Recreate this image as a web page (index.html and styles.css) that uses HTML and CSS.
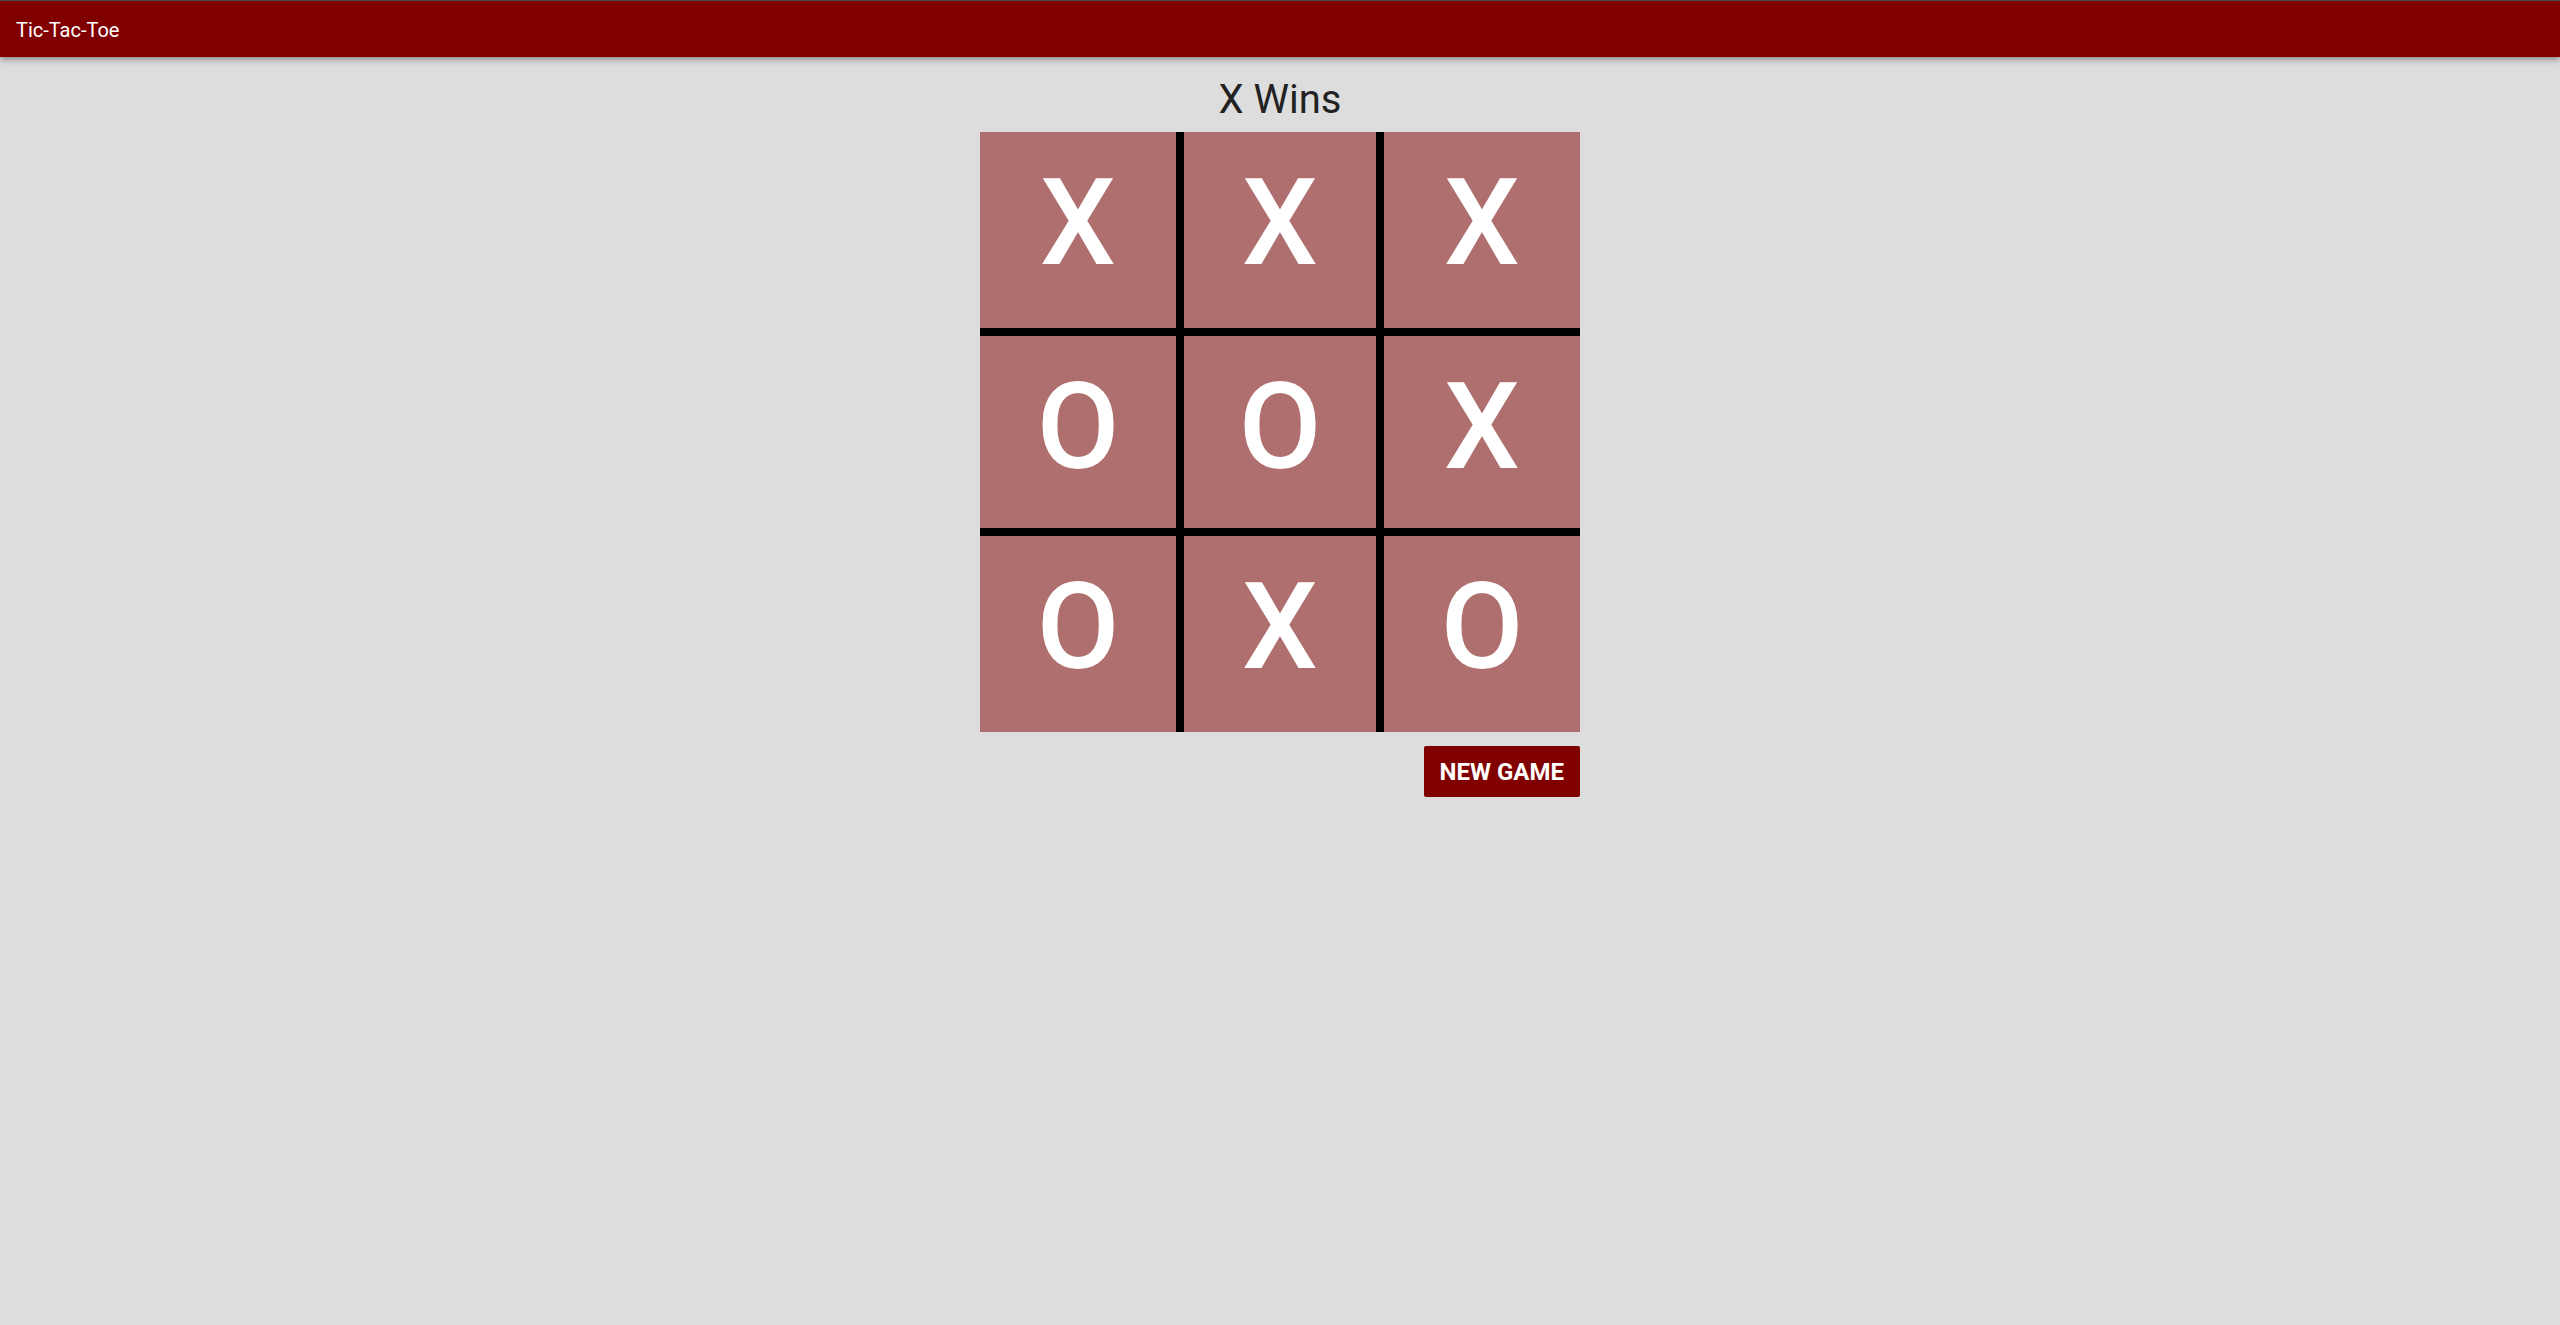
FILE: index.html
```html
<!DOCTYPE html>
<html>
<head>
<meta charset="utf-8">
<title>Tic-Tac-Toe</title>
<link rel="stylesheet" href="styles.css">
</head>
<body>
<header class="appbar"><span class="appbar-title">Tic-Tac-Toe</span></header>
<main class="game">
  <h1 class="status">X Wins</h1>
  <div class="board">
    <div class="cell c-tl">X</div>
    <div class="cell c-tm">X</div>
    <div class="cell c-tr">X</div>
    <div class="cell c-ml">O</div>
    <div class="cell c-mm">O</div>
    <div class="cell c-mr">X</div>
    <div class="cell c-bl">O</div>
    <div class="cell c-bm">X</div>
    <div class="cell c-br">O</div>
  </div>
  <div class="actions"><button class="new-game">NEW GAME</button></div>
</main>
</body>
</html>
```
FILE: styles.css
```css
html, body {
  margin: 0;
  padding: 0;
  background: #dddddd;
  font-family: Roboto, "Liberation Sans", sans-serif;
}
.appbar {
  box-sizing: border-box;
  height: 57px;
  border-top: 1px solid #4d4d4d;
  background: #800000;
  color: #ffffff;
  display: flex;
  align-items: center;
  padding-left: 16px;
  box-shadow: 0 2px 4px -1px rgba(0,0,0,0.2), 0 4px 5px 0 rgba(0,0,0,0.14), 0 1px 10px 0 rgba(0,0,0,0.12);
  position: relative;
}
.appbar-title {
  font-size: 20px;
  font-weight: 400;
  line-height: 1;
  padding-top: 2px;
}
.game {
  width: 600px;
  margin: 0 auto;
  display: flex;
  flex-direction: column;
}
.status {
  margin: 19px 0 8px;
  font-size: 40px;
  line-height: 48px;
  font-weight: 400;
  color: #222222;
  text-align: center;
}
.board {
  display: grid;
  grid-template-columns: repeat(3, 200px);
  grid-template-rows: repeat(3, 200px);
}
.cell {
  box-sizing: border-box;
  background: #af6f6f;
  color: #ffffff;
  font-size: 120px;
  font-weight: 500;
  line-height: 180px;
  padding-top: 1px;
  text-align: center;
  border: 0 solid #000000;
}
.c-tl { border-width: 0 4px 4px 0; }
.c-tm { border-width: 0 4px 4px 4px; }
.c-tr { border-width: 0 0 4px 4px; }
.c-ml { border-width: 4px 4px 4px 0; }
.c-mm { border-width: 4px; }
.c-mr { border-width: 4px 0 4px 4px; }
.c-bl { border-width: 4px 4px 0 0; }
.c-bm { border-width: 4px 4px 0 4px; }
.c-br { border-width: 4px 0 0 4px; }
.actions {
  display: flex;
  justify-content: flex-end;
  margin-top: 14px;
}
.new-game {
  height: 51px;
  padding: 0 16px;
  border: none;
  border-radius: 2px;
  background: #800000;
  color: #ffffff;
  font-family: Roboto, "Liberation Sans", sans-serif;
  font-size: 24px;
  font-weight: 700;
  line-height: 1;
  cursor: pointer;
}
```
